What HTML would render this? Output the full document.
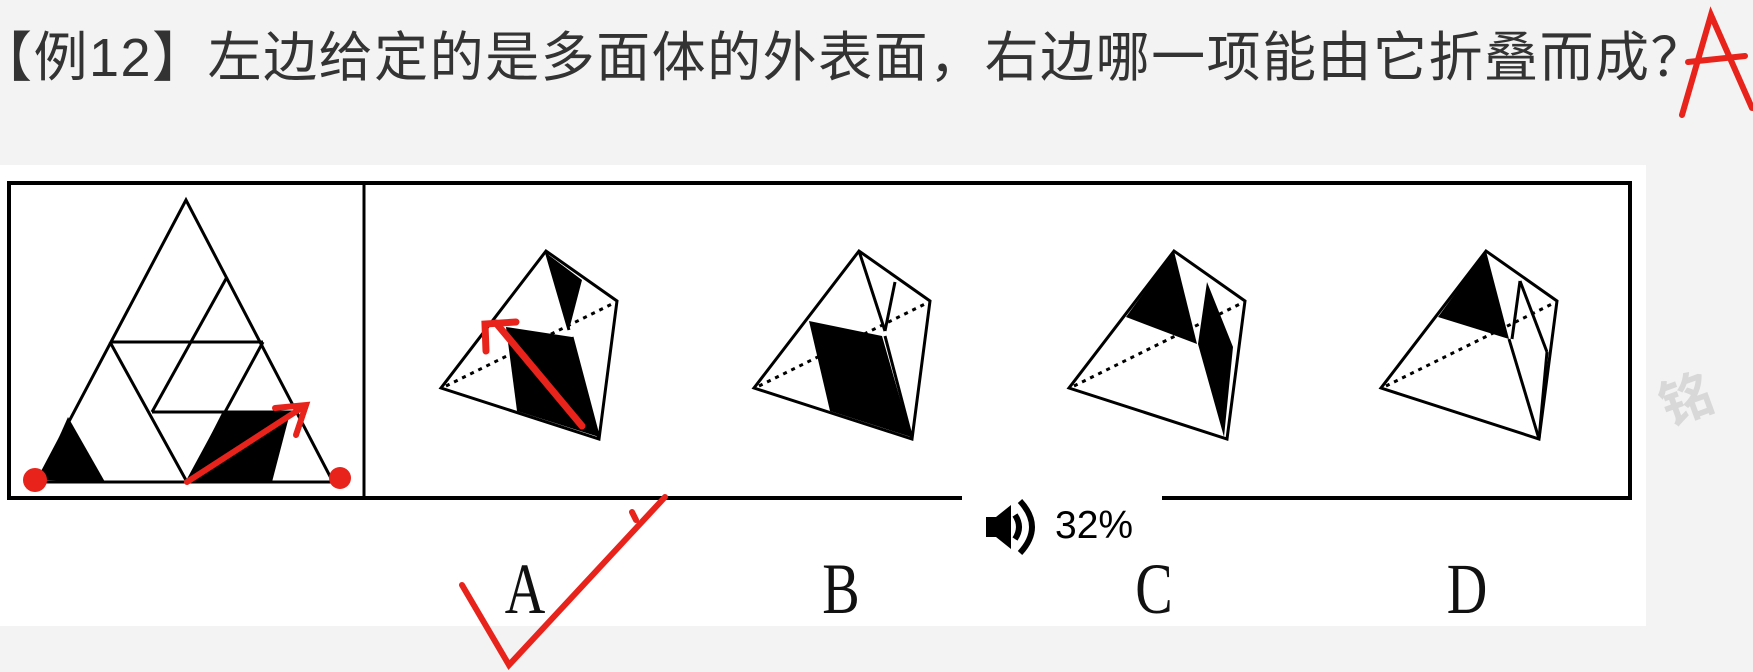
<!DOCTYPE html>
<html><head><meta charset="utf-8"><style>
html,body{margin:0;padding:0;width:1753px;height:672px;overflow:hidden;background:#f3f3f3;position:relative}
.t{position:absolute;left:-22px;top:13px;font:54px "Liberation Sans","Noto Sans CJK SC",sans-serif;color:#333;white-space:nowrap;letter-spacing:1.5px}
.p{position:absolute;left:0;top:165px;width:1646px;height:461px;background:#fff}
.l{position:absolute;top:548px;font:72px "Liberation Serif",serif;color:#111;transform:scaleX(0.78);width:60px;text-align:center}
.v{position:absolute;left:962px;top:496px;width:200px;height:60px;background:#fff}
.vt{position:absolute;left:1055px;top:504px;font:39px "Liberation Sans",sans-serif;color:#000}
</style></head><body>
<div class="t">【例12】左边给定的是多面体的外表面，右边哪一项能由它折叠而成？</div>
<div class="p"></div>
<svg width="1753" height="672" style="position:absolute;left:0;top:0">
<rect x="9" y="183" width="1621" height="315" fill="none" stroke="#000" stroke-width="4"/>
<line x1="364" y1="183" x2="364" y2="498" stroke="#000" stroke-width="3"/>
<g stroke="#000" stroke-width="3" fill="none">
<polygon points="186,200 37,482 333,482"/>
<line x1="110" y1="342" x2="263" y2="342"/>
<line x1="152" y1="412" x2="297" y2="412"/>
<line x1="227" y1="277" x2="152" y2="412"/>
<line x1="263" y1="342" x2="187" y2="482"/>
<line x1="110" y1="342" x2="187" y2="482"/>
</g>
<polygon points="40,480 68,417 105,482" fill="#000"/>
<polygon points="187,482 222,413 290,413 272,482" fill="#000"/>
<g stroke="#e8231b" stroke-width="6" fill="none" stroke-linecap="round">
<line x1="187" y1="482" x2="303" y2="407"/>
<polyline points="275,408 306,405 296,435"/>
</g>
<circle cx="35" cy="480" r="12" fill="#e8231b"/>
<circle cx="340" cy="478" r="11" fill="#e8231b"/>
<defs>
<g id="base" stroke="#000" stroke-width="3" fill="none">
<polygon points="0,0 -105,137 53,188 71,50"/>
<line x1="-100" y1="135" x2="68" y2="52" stroke-dasharray="4 5"/>
</g>
</defs>
<g transform="translate(546,251)">
<use href="#base"/>
<polygon points="0,2 36,29 23,79" fill="#000"/>
<polygon points="-40,76 26,86 53,186 -29,160" fill="#000"/>
<g stroke="#000" stroke-width="3"><line x1="0" y1="0" x2="23" y2="79"/><line x1="26" y1="86" x2="53" y2="188"/></g>
<g stroke="#e8231b" stroke-width="7" fill="none" stroke-linecap="round"><line x1="36" y1="175" x2="-50" y2="72"/><polyline points="-60,100 -61,73 -30,71"/></g>
</g>
<g transform="translate(859,251)">
<use href="#base"/>
<polygon points="-50,70 23,85 52,186 -29,160" fill="#000"/>
<g stroke="#000" stroke-width="3"><line x1="0" y1="0" x2="26" y2="80"/><line x1="36" y1="31" x2="26" y2="80"/><line x1="26" y1="85" x2="53" y2="188"/></g>
</g>
<g transform="translate(1174,251)">
<use href="#base"/>
<polygon points="0,0 -48,66 23,93" fill="#000"/>
<polygon points="33,31 59,96 50,186 24,93" fill="#000"/>
</g>
<g transform="translate(1486,251)">
<use href="#base"/>
<polygon points="0,0 -48,66 23,88" fill="#000"/>
<g stroke="#000" stroke-width="3"><line x1="23" y1="88" x2="53" y2="188"/><line x1="34" y1="30" x2="61" y2="101"/><line x1="34" y1="30" x2="26" y2="88"/><line x1="61" y1="101" x2="53" y2="188"/></g>
</g>
<g stroke="#e8231b" stroke-width="6" fill="none" stroke-linecap="round">
<polyline points="462,585 509,665 665,497"/>
<line x1="636" y1="520" x2="632" y2="512"/>
<polyline points="1682,115 1711,15 1752,108"/>
<line x1="1688" y1="62" x2="1745" y2="56"/>
</g>
<text x="1660" y="420" font-family="Noto Sans CJK SC,sans-serif" font-size="52" font-weight="bold" fill="#d8d8d8" transform="rotate(-20 1680 400)">铭</text>
</svg>
<div class="l" style="left:495px">A</div>
<div class="l" style="left:811px">B</div>
<div class="l" style="left:1124px">C</div>
<div class="l" style="left:1437px">D</div>
<div class="v"></div>
<svg width="64" height="64" style="position:absolute;left:980px;top:495px">
<path d="M6,22 h10 l15,-12 v44 l-15,-12 h-10 z" fill="#000"/>
<path d="M35,20 q8,12 0,24" stroke="#000" stroke-width="6" fill="none"/>
<path d="M40,6 q24,26 0,52" stroke="#000" stroke-width="6" fill="none"/>
</svg>
<div class="vt">32%</div>
</body></html>
